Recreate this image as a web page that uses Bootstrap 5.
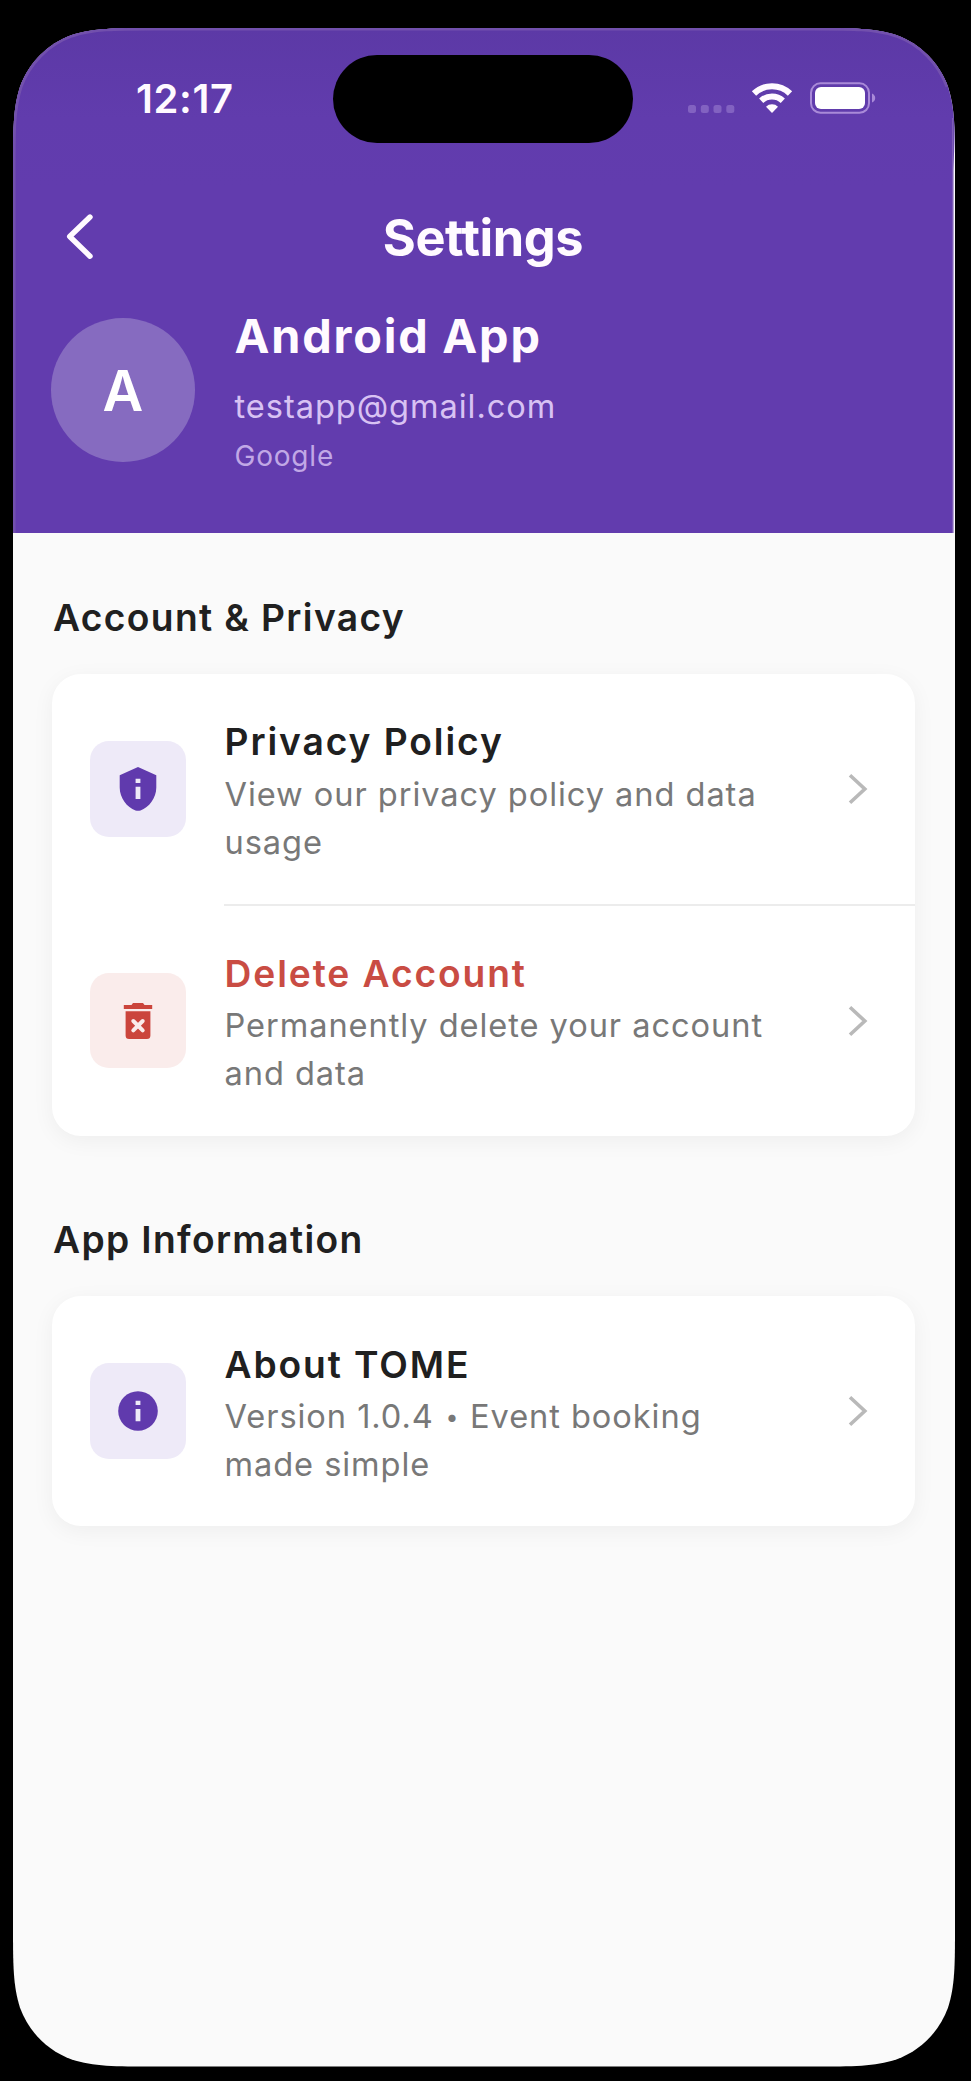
<!DOCTYPE html>
<html lang="en">
<head>
<meta charset="utf-8">
<meta name="viewport" content="width=device-width, initial-scale=1">
<title>Settings</title>
<link href="https://cdn.jsdelivr.net/npm/bootstrap@5.3.0/dist/css/bootstrap.min.css" rel="stylesheet">
<style>
  body { background: #000; font-family: Inter, "Liberation Sans", sans-serif; color: #202020; }
  .phone { width: 942px; height: 2038.5px; margin: 28px 0 0 13px; background: #fafafa;
    clip-path: path("M0 142.2C0 101.2 0 80.8 7 58.7C15.7 34.7 34.7 15.7 58.7 7C80.8 0 101.2 0 142.2 0H799.8C840.8 0 861.2 0 883.3 7C907.3 15.7 926.3 34.7 935 58.7C942 80.8 942 101.2 942 142.2V1896.3C942 1937.3 942 1957.7 935 1979.8C926.3 2003.8 907.3 2022.8 883.3 2031.5C861.2 2038.5 840.8 2038.5 799.8 2038.5H142.2C101.2 2038.5 80.8 2038.5 58.7 2031.5C34.7 2022.8 15.7 2003.8 7 1979.8C0 1957.7 0 1937.3 0 1896.3Z"); }
  .hero { height: 505px; color: #fffaff; background: linear-gradient(#5c39a6, #613cad 90px, #623cae 160px); }
  .rim { left: 0; top: 0; pointer-events: none; }
  .status { height: 142px; }
  .clock { width: 320px; padding-left: 123px; padding-top: 47px; font-size: 40px; line-height: 48px; font-weight: 600; letter-spacing: .6px; }
  .island { width: 300px; height: 88.5px; margin-top: 26.5px; border-radius: 45px; background: #000; }
  .status-icons { margin-left: 53px; margin-top: 52px; }
  .title-row { height: 136px; padding-right: 2px; }
  .title-row h1 { font-size: 50.5px; line-height: 60px; font-weight: 700; letter-spacing: -.4px; }
  .back { left: 52px; top: 42px; }
  .profile { padding-left: 38px; gap: 40px; height: 168px; }
  .avatar { width: 143.5px; height: 143.5px; background: #866bc0; font-size: 56px; font-weight: 600; color: #fff; padding-top: 1px; }
  .person { font-size: 46.8px; line-height: 57.6px; font-weight: 700; letter-spacing: 1.8px; margin: 3px 0 16px; }
  .mail { font-size: 32.6px; line-height: 48px; color: #d8c2f3; letter-spacing: .95px; margin-bottom: 6.8px; }
  .provider { font-size: 28px; line-height: 38.4px; color: #c1a8e6; letter-spacing: .8px; }
  .content { padding: 56px 40px 0 38.5px; }
  .section-title { font-size: 37.2px; line-height: 57.6px; font-weight: 600; letter-spacing: 1.35px; margin: 0 0 27.4px 1.5px; }
  .panel { border: 0; border-radius: 29px; box-shadow: 0 5px 22px rgba(0,0,0,.05); margin-bottom: 75.6px; background: #fff; }
  .entry { height: 229.8px; padding: 0 38px 0 38.5px; }
  .tile { width: 95.5px; height: 95.5px; border-radius: 19px; background: #eeeaf8; margin-right: 39px; color: #603aad; }
  .tile-danger { background: #faeceb; color: #cb453c; }
  .entry-title { font-size: 37.2px; line-height: 57.6px; font-weight: 600; letter-spacing: 1.9px; padding-top: 1.4px; margin-bottom: -1.4px; }
  .entry-text { font-size: 32.6px; line-height: 48px; color: #787878; letter-spacing: .94px; }
  .dot { display: inline-block; font-size: 23px; line-height: 1; width: 16px; text-align: center; vertical-align: 3px; letter-spacing: 0; }
  .rule { height: 2px; background: #ececec; margin-left: 172px; }
  .danger-text { color: #c94c43; }
  .go { margin-right: 7px; }
</style>
</head>
<body>
<svg width="0" height="0" class="position-absolute" aria-hidden="true">
  <symbol id="chevron" viewBox="-12 -18 24 36"><path d="M-8-13.800L6.800 0L-8 13.800" fill="none" stroke="#b9b9b9" stroke-width="3.600"/></symbol>
</svg>
<main class="phone position-relative">
  <header class="hero">
    <div class="status d-flex align-items-start">
      <div class="clock">12:17</div>
      <div class="island"></div>
      <svg class="status-icons" width="192" height="36" viewBox="686 80 192 36">
        <g fill="#8262c1"><rect x="688" y="105" width="8" height="8" rx="2.5"/><rect x="700.8" y="105" width="8" height="8" rx="2.5"/><rect x="713.5" y="105" width="8" height="8" rx="2.5"/><rect x="726.3" y="105" width="8" height="8" rx="2.5"/></g>
        <g fill="none" stroke="#fffaff" stroke-width="6.2"><path d="M754 93.500a26 26 0 0 1 36 0"/><path d="M761.200 100.700a16 16 0 0 1 21.600 0"/></g>
        <path d="M772 113l-6-6.200a8.500 8.500 0 0 1 12 0z" fill="#fffaff"/>
        <rect x="811" y="83.300" width="58" height="29.500" rx="9.500" fill="none" stroke="#a98ad8" stroke-width="2"/>
        <rect x="815" y="87" width="50" height="22" rx="6" fill="#fff"/><path d="M872 93.500q3.200 1.500 3.200 4.500t-3.200 4.500z" fill="#a98ad8"/>
      </svg>
    </div>
    <div class="title-row position-relative d-flex justify-content-center align-items-center">
      <svg class="back position-absolute" width="32" height="52" viewBox="0 0 32 52"><path d="M25 5L4.700 24.500L25 44.200" fill="none" stroke="#fffaff" stroke-width="5.400" stroke-linecap="round" stroke-linejoin="round"/></svg>
      <h1 class="m-0">Settings</h1>
    </div>
    <div class="profile d-flex align-items-center">
      <div class="avatar rounded-circle d-flex align-items-center justify-content-center">A</div>
      <div>
        <div class="person">Android App</div>
        <div class="mail">testapp@gmail.com</div>
        <div class="provider">Google</div>
      </div>
    </div>
    <svg class="rim position-absolute" width="942" height="505" viewBox="0 0 942 505">
      <path d="M0 505V142.200C0 101.200 0 80.800 7 58.700C15.700 34.700 34.700 15.700 58.700 7C80.800 0 101.200 0 142.200 0H799.800C840.800 0 861.200 0 883.300 7C907.300 15.700 926.300 34.700 935 58.700" fill="none" stroke="#7250ad" stroke-width="5"/>
      <path d="M939.700 90V505" fill="none" stroke="#7c5db6" stroke-width="1.500"/>
      <path d="M942 95L940.500 142V505H942z" fill="#fafafa"/>
    </svg>
  </header>
  <div class="content">
    <h2 class="section-title">Account &amp; Privacy</h2>
    <section class="card panel">
      <div class="entry d-flex align-items-center">
        <div class="tile flex-shrink-0 d-flex align-items-center justify-content-center">
          <svg width="48" height="48" viewBox="-24 -24 48 48"><path d="M0-22L18.300-13.700V-1.500C18.300 9 11 18.500 2.500 21.400Q0 22.300-2.500 21.400C-11 18.500-18.300 9-18.300-1.500V-13.700Z" fill="currentColor"/><path d="M-2.400-10.300h4.800v4.300h-4.800zM-2.400-2.300h4.800v12.300h-4.800z" fill="#eeeaf8"/></svg>
        </div>
        <div class="flex-grow-1 text-nowrap">
          <div class="entry-title">Privacy Policy</div>
          <div class="entry-text">View our privacy policy and data<br>usage</div>
        </div>
        <svg class="go" width="24" height="36"><use href="#chevron"/></svg>
      </div>
      <div class="rule"></div>
      <div class="entry d-flex align-items-center">
        <div class="tile tile-danger flex-shrink-0 d-flex align-items-center justify-content-center">
          <svg width="48" height="48" viewBox="-24 -24 48 48"><path d="M-14.200-16H-6.500L-5-18H5L6.500-16H14.200V-12H-14.200ZM-12.400-9.700H12.400V14.500Q12.400 18 8.900 18H-8.900Q-12.400 18-12.400 14.500Z" fill="currentColor"/><path d="M-4.700 0L4.700 9.400M4.700 0L-4.700 9.400" stroke="#faeceb" stroke-width="4" stroke-linecap="round"/></svg>
        </div>
        <div class="flex-grow-1 text-nowrap">
          <div class="entry-title danger-text">Delete Account</div>
          <div class="entry-text">Permanently delete your account<br>and data</div>
        </div>
        <svg class="go" width="24" height="36"><use href="#chevron"/></svg>
      </div>
    </section>
    <h2 class="section-title">App Information</h2>
    <section class="card panel">
      <div class="entry d-flex align-items-center">
        <div class="tile flex-shrink-0 d-flex align-items-center justify-content-center">
          <svg width="48" height="48" viewBox="-24 -24 48 48"><circle r="19.800" fill="currentColor"/><path d="M-2.400-10.200h4.800v4.200h-4.800zM-2.400-2h4.800v12.200h-4.800z" fill="#eeeaf8"/></svg>
        </div>
        <div class="flex-grow-1 text-nowrap">
          <div class="entry-title">About TOME</div>
          <div class="entry-text">Version 1.0.4 <span class="dot">•</span> Event booking<br>made simple</div>
        </div>
        <svg class="go" width="24" height="36"><use href="#chevron"/></svg>
      </div>
    </section>
  </div>
</main>
<script src="https://cdn.jsdelivr.net/npm/bootstrap@5.3.0/dist/js/bootstrap.bundle.min.js"></script>
</body>
</html>
